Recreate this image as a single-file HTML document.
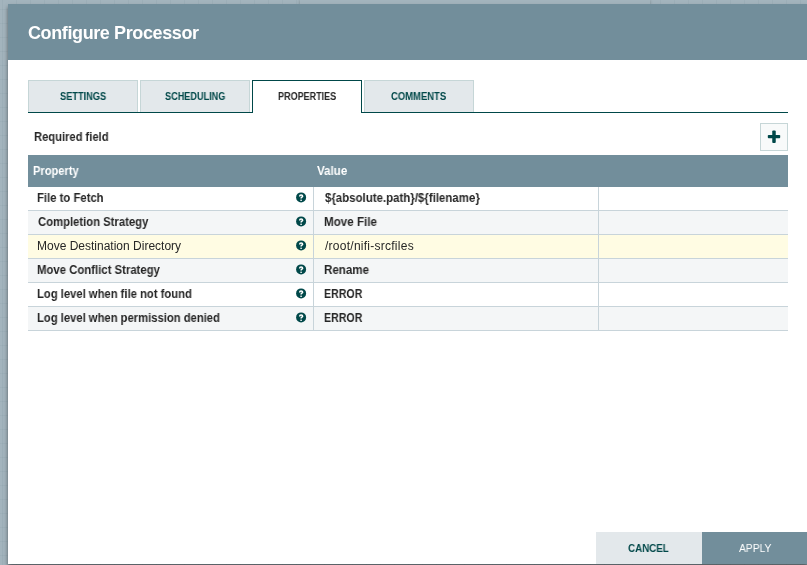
<!DOCTYPE html>
<html>
<head>
<meta charset="utf-8">
<style>
html,body{margin:0;padding:0;}
body{width:807px;height:565px;overflow:hidden;position:relative;background:#a3b4bd;font-family:"Liberation Sans",sans-serif;}
.grid{position:absolute;left:0;top:0;width:807px;height:565px;
 background-image:linear-gradient(to right, rgba(110,130,140,0.1) 1px, transparent 1px),linear-gradient(to bottom, rgba(110,130,140,0.1) 1px, transparent 1px);
 background-size:14px 14px;background-position:2px 9px;}
.dlg{position:absolute;left:8px;top:4px;width:800px;height:560px;background:#fff;box-shadow:0 3px 4px rgba(0,0,0,0.5);}
.hdr{position:absolute;left:8px;top:4px;width:800px;height:56px;background:#728e9b;}
.tx{position:absolute;line-height:14px;white-space:nowrap;will-change:transform;}
.tab{position:absolute;top:80px;width:108px;height:31px;background:#e3e8eb;border:1px solid #c6d6d7;border-bottom:none;}
.tab.sel{background:#fff;border:1px solid #004849;border-bottom:none;height:32px;}
.tabline{position:absolute;left:28px;top:112px;width:760px;height:1px;background:#004849;}
.addbtn{position:absolute;left:760px;top:123px;width:26px;height:26px;border:1px solid #c6d6d7;background:#f8fafa;}
.thead{position:absolute;left:28px;top:155px;width:760px;height:32px;background:#728e9b;}
.row{position:absolute;left:28px;width:760px;height:23px;border-bottom:1px solid #c8d4da;}
.row::before{content:"";position:absolute;left:285px;top:0;width:1px;height:24px;background:#c8d4da;}
.row::after{content:"";position:absolute;left:570px;top:0;width:1px;height:24px;background:#c8d4da;}
.row.w{background:#fff;}
.row.g{background:#f4f6f7;}
.row.y{background:#fffce3;}
.help{position:absolute;overflow:visible;}
.btn{position:absolute;top:532px;height:32px;}
</style>
</head>
<body>
<div class="grid"></div>
<div style="position:absolute;left:300px;top:0;width:350px;height:6px;background:#a3b4bd;box-shadow:0 0 3px rgba(0,0,0,0.25);"></div>
<div class="dlg"></div>
<div class="hdr"></div>
<div class="tx" id="title" style="left:28.00px;top:19px;font-size:18px;font-weight:bold;color:#fff;letter-spacing:-0.389px;line-height:28px;">Configure Processor</div>
<div class="tab" style="left:28px"></div>
<div class="tab" style="left:140px"></div>
<div class="tab" style="left:364px"></div>
<div class="tabline"></div>
<div class="tab sel" style="left:252px"></div>
<div class="tx" id="t1" style="left:60.12px;top:90px;font-size:10px;font-weight:bold;color:#004849;letter-spacing:0px;transform:scaleX(0.9240);transform-origin:0 0;">SETTINGS</div>
<div class="tx" id="t2" style="left:164.71px;top:90px;font-size:10px;font-weight:bold;color:#004849;letter-spacing:0px;transform:scaleX(0.9136);transform-origin:0 0;">SCHEDULING</div>
<div class="tx" id="t3" style="left:278.29px;top:90px;font-size:10px;font-weight:bold;color:#262626;letter-spacing:0px;transform:scaleX(0.9031);transform-origin:0 0;">PROPERTIES</div>
<div class="tx" id="t4" style="left:391.18px;top:90px;font-size:10px;font-weight:bold;color:#004849;letter-spacing:0px;transform:scaleX(0.9448);transform-origin:0 0;">COMMENTS</div>
<div class="tx" id="req" style="left:34.20px;top:130px;font-size:12px;font-weight:bold;color:#262626;letter-spacing:0px;transform:scaleX(0.9316);transform-origin:0 0;">Required field</div>
<div class="addbtn"><svg width="26" height="26" viewBox="0 0 26 26" style="position:absolute;left:0;top:0"><rect x="6.8" y="10.9" width="12.4" height="3.3" rx="0.9" fill="#004849"/><rect x="11.25" y="6.5" width="3.5" height="12.4" rx="0.9" fill="#004849"/></svg></div>
<div class="thead"></div>
<div class="tx" id="hp" style="left:32.94px;top:164px;font-size:12px;font-weight:bold;color:#fff;letter-spacing:0px;transform:scaleX(0.9245);transform-origin:0 0;">Property</div>
<div class="tx" id="hv" style="left:317.20px;top:164px;font-size:12px;font-weight:bold;color:#fff;letter-spacing:0px;transform:scaleX(0.9645);transform-origin:0 0;">Value</div>
<div class="row w" style="top:187px"></div>
<div class="tx" id="p1" style="left:37.46px;top:191px;font-size:12px;font-weight:bold;color:#262626;letter-spacing:0px;transform:scaleX(0.9420);transform-origin:0 0;">File to Fetch</div>
<svg class="help" style="left:296px;top:192px" width="10" height="10" viewBox="-0.1 -0.4 10 10"><circle cx="5" cy="5" r="5" fill="#004849"/><path d="M3.55 4.0C3.55 3.1 4.15 2.6 5.0 2.6C5.85 2.6 6.55 3.1 6.55 3.85C6.55 4.8 5.0 4.85 5.0 6.0" stroke="#fff" stroke-width="1.5" fill="none"/><rect x="4.25" y="7.25" width="1.5" height="1.3" fill="#fff"/></svg>
<div class="tx" id="v1" style="left:324.80px;top:191px;font-size:12px;font-weight:bold;color:#262626;letter-spacing:0px;transform:scaleX(0.9549);transform-origin:0 0;">${absolute.path}/${filename}</div>
<div class="row g" style="top:211px"></div>
<div class="tx" id="p2" style="left:38.40px;top:215px;font-size:12px;font-weight:bold;color:#262626;letter-spacing:0px;transform:scaleX(0.9402);transform-origin:0 0;">Completion Strategy</div>
<svg class="help" style="left:296px;top:216px" width="10" height="10" viewBox="-0.1 -0.4 10 10"><circle cx="5" cy="5" r="5" fill="#004849"/><path d="M3.55 4.0C3.55 3.1 4.15 2.6 5.0 2.6C5.85 2.6 6.55 3.1 6.55 3.85C6.55 4.8 5.0 4.85 5.0 6.0" stroke="#fff" stroke-width="1.5" fill="none"/><rect x="4.25" y="7.25" width="1.5" height="1.3" fill="#fff"/></svg>
<div class="tx" id="v2" style="left:323.83px;top:215px;font-size:12px;font-weight:bold;color:#262626;letter-spacing:0px;transform:scaleX(0.9679);transform-origin:0 0;">Move File</div>
<div class="row y" style="top:235px"></div>
<div class="tx" id="p3" style="left:37.40px;top:239px;font-size:12px;font-weight:normal;color:#262626;letter-spacing:0.0px;">Move Destination Directory</div>
<svg class="help" style="left:296px;top:240px" width="10" height="10" viewBox="-0.1 -0.4 10 10"><circle cx="5" cy="5" r="5" fill="#004849"/><path d="M3.55 4.0C3.55 3.1 4.15 2.6 5.0 2.6C5.85 2.6 6.55 3.1 6.55 3.85C6.55 4.8 5.0 4.85 5.0 6.0" stroke="#fff" stroke-width="1.5" fill="none"/><rect x="4.25" y="7.25" width="1.5" height="1.3" fill="#fff"/></svg>
<div class="tx" id="v3" style="left:324.80px;top:239px;font-size:12px;font-weight:normal;color:#262626;letter-spacing:0.256px;">/root/nifi-srcfiles</div>
<div class="row g" style="top:259px"></div>
<div class="tx" id="p4" style="left:37.45px;top:263px;font-size:12px;font-weight:bold;color:#262626;letter-spacing:0px;transform:scaleX(0.9457);transform-origin:0 0;">Move Conflict Strategy</div>
<svg class="help" style="left:296px;top:264px" width="10" height="10" viewBox="-0.1 -0.4 10 10"><circle cx="5" cy="5" r="5" fill="#004849"/><path d="M3.55 4.0C3.55 3.1 4.15 2.6 5.0 2.6C5.85 2.6 6.55 3.1 6.55 3.85C6.55 4.8 5.0 4.85 5.0 6.0" stroke="#fff" stroke-width="1.5" fill="none"/><rect x="4.25" y="7.25" width="1.5" height="1.3" fill="#fff"/></svg>
<div class="tx" id="v4" style="left:323.84px;top:263px;font-size:12px;font-weight:bold;color:#262626;letter-spacing:0px;transform:scaleX(0.9644);transform-origin:0 0;">Rename</div>
<div class="row w" style="top:283px"></div>
<div class="tx" id="p5" style="left:37.46px;top:287px;font-size:12px;font-weight:bold;color:#262626;letter-spacing:0px;transform:scaleX(0.9366);transform-origin:0 0;">Log level when file not found</div>
<svg class="help" style="left:296px;top:288px" width="10" height="10" viewBox="-0.1 -0.4 10 10"><circle cx="5" cy="5" r="5" fill="#004849"/><path d="M3.55 4.0C3.55 3.1 4.15 2.6 5.0 2.6C5.85 2.6 6.55 3.1 6.55 3.85C6.55 4.8 5.0 4.85 5.0 6.0" stroke="#fff" stroke-width="1.5" fill="none"/><rect x="4.25" y="7.25" width="1.5" height="1.3" fill="#fff"/></svg>
<div class="tx" id="v5" style="left:323.91px;top:287px;font-size:12px;font-weight:bold;color:#262626;letter-spacing:0px;transform:scaleX(0.8857);transform-origin:0 0;">ERROR</div>
<div class="row g" style="top:307px"></div>
<div class="tx" id="p6" style="left:37.46px;top:311px;font-size:12px;font-weight:bold;color:#262626;letter-spacing:0px;transform:scaleX(0.9361);transform-origin:0 0;">Log level when permission denied</div>
<svg class="help" style="left:296px;top:312px" width="10" height="10" viewBox="-0.1 -0.4 10 10"><circle cx="5" cy="5" r="5" fill="#004849"/><path d="M3.55 4.0C3.55 3.1 4.15 2.6 5.0 2.6C5.85 2.6 6.55 3.1 6.55 3.85C6.55 4.8 5.0 4.85 5.0 6.0" stroke="#fff" stroke-width="1.5" fill="none"/><rect x="4.25" y="7.25" width="1.5" height="1.3" fill="#fff"/></svg>
<div class="tx" id="v6" style="left:323.91px;top:311px;font-size:12px;font-weight:bold;color:#262626;letter-spacing:0px;transform:scaleX(0.8857);transform-origin:0 0;">ERROR</div>
<div class="btn" style="left:596px;width:106px;background:#e3e8eb"></div>
<div class="btn" style="left:702px;width:106px;background:#728e9b"></div>
<div class="tx" id="bc" style="left:628.42px;top:541px;font-size:11px;font-weight:bold;color:#004849;letter-spacing:0px;transform:scaleX(0.8891);transform-origin:0 0;">CANCEL</div>
<div class="tx" id="ba" style="left:738.71px;top:541px;font-size:11px;font-weight:normal;color:#fff;letter-spacing:0px;transform:scaleX(0.9353);transform-origin:0 0;">APPLY</div>
</body>
</html>
